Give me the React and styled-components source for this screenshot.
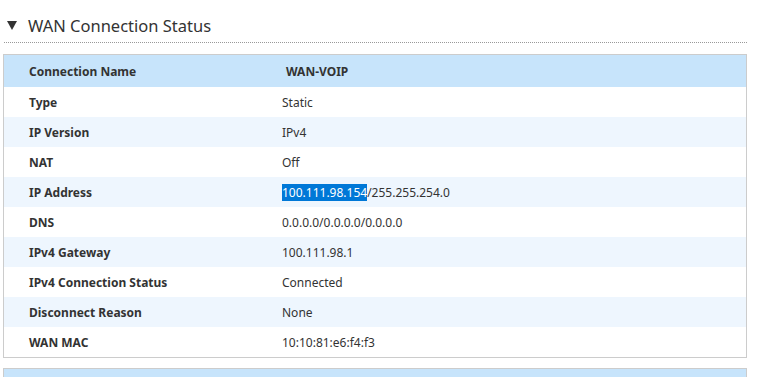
import React from 'react';
import styled, { createGlobalStyle } from 'styled-components';

const GlobalStyle = createGlobalStyle`
  html, body {
    margin: 0;
    padding: 0;
    background: #fff;
    font-family: 'Noto Sans', 'Open Sans', sans-serif;
    color: #333;
  }
`;

const Page = styled.div`
  width: 762px;
  height: 377px;
  overflow: hidden;
  padding: 0 15px 0 3px;
  box-sizing: border-box;
`;

const Section = styled.div`
  margin-bottom: 10px;
`;

const Title = styled.div`
  display: flex;
  align-items: flex-end;
  height: 43px;
  margin-left: 1px;
  border-bottom: 1px dotted #999;
  font-size: 16.5px;
  line-height: 20px;
  color: #333;
  box-sizing: border-box;
  padding-bottom: 6px;
`;

const Arrow = styled.span`
  width: 0;
  height: 0;
  border-left: 5px solid transparent;
  border-right: 5px solid transparent;
  border-top: 9px solid #333;
  margin: 0 11px 6px 3px;
`;

const Table = styled.div`
  margin-top: 11px;
  border: 1px solid #ccc;
`;

const Row = styled.div`
  display: grid;
  grid-template-columns: 278px 1fr;
  align-items: center;
  height: ${p => (p.$head ? 32 : 30)}px;
  background: ${p => (p.$head ? '#c7e4fb' : p.$alt ? '#eef6fe' : '#fff')};
  font-size: 12px;
`;

const Label = styled.div`
  padding-left: 25px;
  font-weight: bold;
`;

const Value = styled.div`
  font-weight: ${p => (p.$bold ? 'bold' : 'normal')};
  padding-left: ${p => (p.$bold ? 4 : 0)}px;
`;

const Selected = styled.span`
  background: #0078d7;
  color: #fff;
`;

const EmptyTable = styled.div`
  border: 1px solid #ccc;
  height: 40px;
  background: #c7e4fb;
`;

const rows = [
  ['Type', 'Static'],
  ['IP Version', 'IPv4'],
  ['NAT', 'Off'],
  ['IP Address', <><Selected>100.111.98.154</Selected>/255.255.254.0</>],
  ['DNS', '0.0.0.0/0.0.0.0/0.0.0.0'],
  ['IPv4 Gateway', '100.111.98.1'],
  ['IPv4 Connection Status', 'Connected'],
  ['Disconnect Reason', 'None'],
  ['WAN MAC', '10:10:81:e6:f4:f3'],
];

export default function App() {
  return (
    <Page>
      <GlobalStyle />
      <Section>
        <Title>
          <Arrow />
          WAN Connection Status
        </Title>
        <Table>
          <Row $head>
            <Label>Connection Name</Label>
            <Value $bold>WAN-VOIP</Value>
          </Row>
          {rows.map(([k, v], i) => (
            <Row key={k} $alt={i % 2 === 1}>
              <Label>{k}</Label>
              <Value>{v}</Value>
            </Row>
          ))}
        </Table>
      </Section>
      <EmptyTable />
    </Page>
  );
}
